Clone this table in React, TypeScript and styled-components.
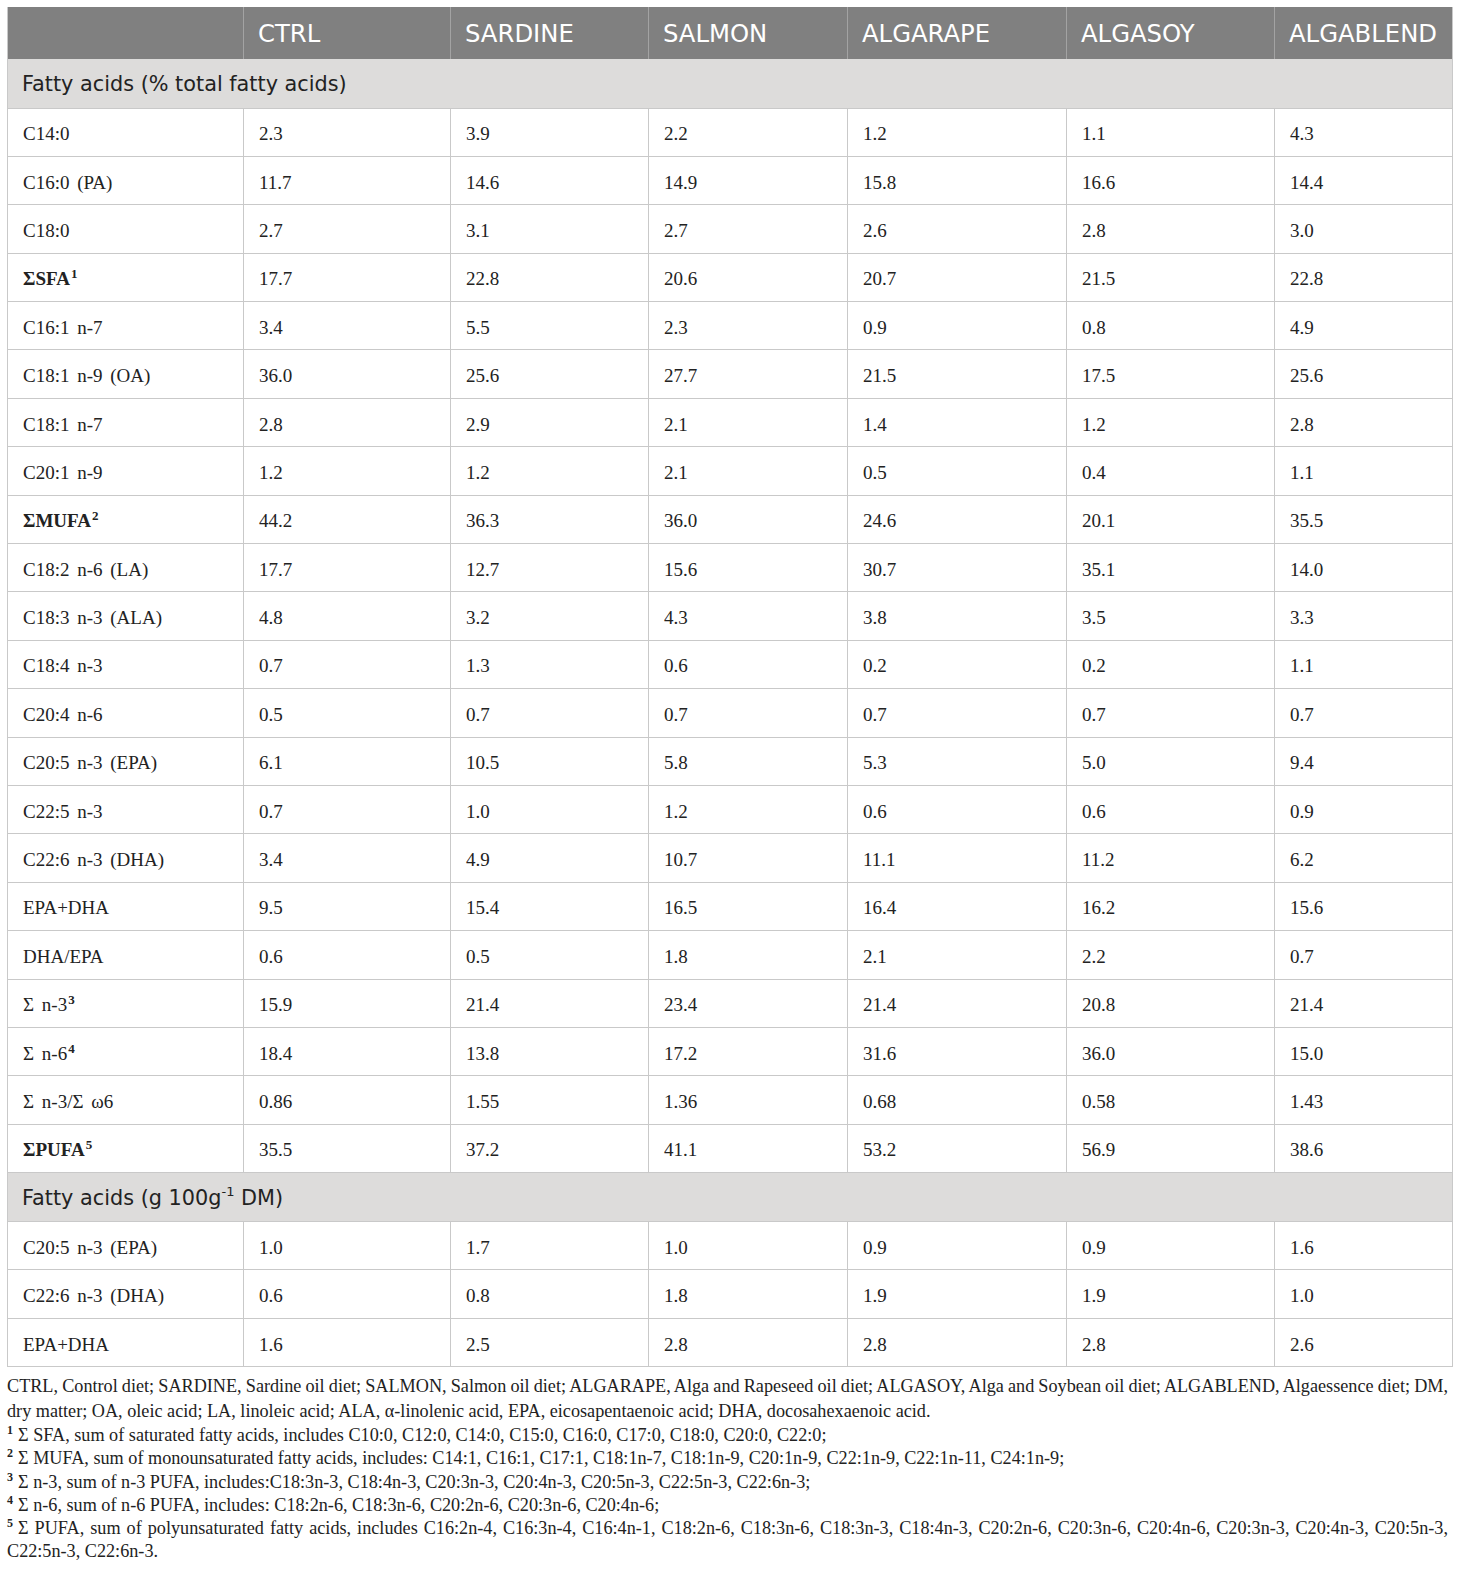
import React from "react";
import styled, { createGlobalStyle } from "styled-components";

const Global = createGlobalStyle`
  html, body { margin: 0; padding: 0; background: #ffffff; }
  body { font-family: "Liberation Serif", serif; color: #222; }
`;

const Page = styled.div`
  padding: 7px 8px 0 7px;
  width: 1460px;
  box-sizing: border-box;
`;

const Table = styled.table`
  width: 1445px;
  border-collapse: collapse;
  table-layout: fixed;
  border-left: 1px solid #c9c9c9;
  border-right: 1px solid #c9c9c9;
  border-bottom: 1px solid #c9c9c9;
`;

const Col = styled.col<{ $w: number }>`
  width: ${(p) => p.$w}px;
`;

const HeadRow = styled.tr`
  height: 52px;
  background: #808080;
`;

const HeadCell = styled.th`
  font-family: "DejaVu Sans", Verdana, sans-serif;
  font-weight: 400;
  font-size: 24.3px;
  color: #ffffff;
  text-align: left;
  padding: 0 0 0 14px;
  border-left: 1px solid #a3a3a3;
  vertical-align: middle;
  white-space: nowrap;
  &:first-child { border-left: none; }
`;

const SectionRow = styled.tr`
  height: 49px;
  background: #dddcdb;
`;

const SectionCell = styled.td`
  font-family: "DejaVu Sans", Verdana, sans-serif;
  font-size: 20.8px;
  color: #222;
  padding: 2px 0 0 14px;
  border-bottom: 1px solid #c9c9c9;
  vertical-align: middle;
  sup { font-size: 13px; vertical-align: 9px; line-height: 0; }
`;

const Row = styled.tr`
  height: 48.4px;
`;

const Cell = styled.td<{ $bold?: boolean }>`
  font-family: "Liberation Serif", serif;
  font-size: 19px;
  word-spacing: 3px;
  font-weight: ${(p) => (p.$bold ? 700 : 400)};
  color: #222;
  padding: 4px 0 0 15px;
  border: 1px solid #c9c9c9;
  vertical-align: middle;
  white-space: nowrap;
  sup { font-size: 13px; vertical-align: 7px; line-height: 0; font-weight: 700; margin-left: 1px; }
`;

const Notes = styled.div`
  width: 1441px;
  margin-top: 7px;
  font-family: "Liberation Serif", serif;
  font-size: 18.2px;
  line-height: 23.2px;
  color: #222;
`;

const Note = styled.p<{ $lh?: number }>`
  margin: 0;
  white-space: nowrap;
  line-height: ${(p) => (p.$lh ? `${p.$lh}px` : "23.2px")};
  sup { font-size: 12px; vertical-align: 7px; line-height: 0; font-weight: 700; margin-right: 5px; }
`;

const FullLine = styled.span`
  display: block;
  width: 1441px;
  word-spacing: -2px;
  text-align: justify;
  text-align-last: justify;
`;

type R = { label: React.ReactNode; bold?: boolean; v: string[] };

const cols = [236, 207, 198, 199, 219, 208, 178];
const heads = ["", "CTRL", "SARDINE", "SALMON", "ALGARAPE", "ALGASOY", "ALGABLEND"];

const sec1: R[] = [
  { label: "C14:0", v: ["2.3", "3.9", "2.2", "1.2", "1.1", "4.3"] },
  { label: "C16:0 (PA)", v: ["11.7", "14.6", "14.9", "15.8", "16.6", "14.4"] },
  { label: "C18:0", v: ["2.7", "3.1", "2.7", "2.6", "2.8", "3.0"] },
  { label: <>ΣSFA<sup>1</sup></>, bold: true, v: ["17.7", "22.8", "20.6", "20.7", "21.5", "22.8"] },
  { label: "C16:1 n-7", v: ["3.4", "5.5", "2.3", "0.9", "0.8", "4.9"] },
  { label: "C18:1 n-9 (OA)", v: ["36.0", "25.6", "27.7", "21.5", "17.5", "25.6"] },
  { label: "C18:1 n-7", v: ["2.8", "2.9", "2.1", "1.4", "1.2", "2.8"] },
  { label: "C20:1 n-9", v: ["1.2", "1.2", "2.1", "0.5", "0.4", "1.1"] },
  { label: <>ΣMUFA<sup>2</sup></>, bold: true, v: ["44.2", "36.3", "36.0", "24.6", "20.1", "35.5"] },
  { label: "C18:2 n-6 (LA)", v: ["17.7", "12.7", "15.6", "30.7", "35.1", "14.0"] },
  { label: "C18:3 n-3 (ALA)", v: ["4.8", "3.2", "4.3", "3.8", "3.5", "3.3"] },
  { label: "C18:4 n-3", v: ["0.7", "1.3", "0.6", "0.2", "0.2", "1.1"] },
  { label: "C20:4 n-6", v: ["0.5", "0.7", "0.7", "0.7", "0.7", "0.7"] },
  { label: "C20:5 n-3 (EPA)", v: ["6.1", "10.5", "5.8", "5.3", "5.0", "9.4"] },
  { label: "C22:5 n-3", v: ["0.7", "1.0", "1.2", "0.6", "0.6", "0.9"] },
  { label: "C22:6 n-3 (DHA)", v: ["3.4", "4.9", "10.7", "11.1", "11.2", "6.2"] },
  { label: "EPA+DHA", v: ["9.5", "15.4", "16.5", "16.4", "16.2", "15.6"] },
  { label: "DHA/EPA", v: ["0.6", "0.5", "1.8", "2.1", "2.2", "0.7"] },
  { label: <>Σ n-3<sup>3</sup></>, v: ["15.9", "21.4", "23.4", "21.4", "20.8", "21.4"] },
  { label: <>Σ n-6<sup>4</sup></>, v: ["18.4", "13.8", "17.2", "31.6", "36.0", "15.0"] },
  { label: "Σ n-3/Σ ω6", v: ["0.86", "1.55", "1.36", "0.68", "0.58", "1.43"] },
  { label: <>ΣPUFA<sup>5</sup></>, bold: true, v: ["35.5", "37.2", "41.1", "53.2", "56.9", "38.6"] },
];

const sec2: R[] = [
  { label: "C20:5 n-3 (EPA)", v: ["1.0", "1.7", "1.0", "0.9", "0.9", "1.6"] },
  { label: "C22:6 n-3 (DHA)", v: ["0.6", "0.8", "1.8", "1.9", "1.9", "1.0"] },
  { label: "EPA+DHA", v: ["1.6", "2.5", "2.8", "2.8", "2.8", "2.6"] },
];

const DataRows = ({ rows }: { rows: R[] }) => (
  <>
    {rows.map((r, i) => (
      <Row key={i}>
        <Cell $bold={r.bold}>{r.label}</Cell>
        {r.v.map((x, j) => (
          <Cell key={j}>{x}</Cell>
        ))}
      </Row>
    ))}
  </>
);

export default function App() {
  return (
    <Page>
      <Global />
      <Table>
        <colgroup>
          {cols.map((w, i) => (
            <Col key={i} $w={w} />
          ))}
        </colgroup>
        <thead>
          <HeadRow>
            {heads.map((h, i) => (
              <HeadCell key={i}>{h}</HeadCell>
            ))}
          </HeadRow>
        </thead>
        <tbody>
          <SectionRow>
            <SectionCell colSpan={7}>Fatty acids (% total fatty acids)</SectionCell>
          </SectionRow>
          <DataRows rows={sec1} />
          <SectionRow>
            <SectionCell colSpan={7}>
              Fatty acids (g 100g<sup>-1</sup> DM)
            </SectionCell>
          </SectionRow>
          <DataRows rows={sec2} />
        </tbody>
      </Table>
      <Notes>
        <Note $lh={25}>
          <FullLine>
            CTRL, Control diet; SARDINE, Sardine oil diet; SALMON, Salmon oil diet; ALGARAPE, Alga and Rapeseed oil diet;
            ALGASOY, Alga and Soybean oil diet; ALGABLEND, Algaessence diet; DM,
          </FullLine>
          dry matter; OA, oleic acid; LA, linoleic acid; ALA, α-linolenic acid, EPA, eicosapentaenoic acid; DHA,
          docosahexaenoic acid.
        </Note>
        <Note>
          <sup>1</sup>Σ SFA, sum of saturated fatty acids, includes C10:0, C12:0, C14:0, C15:0, C16:0, C17:0, C18:0, C20:0,
          C22:0;
        </Note>
        <Note>
          <sup>2</sup>Σ MUFA, sum of monounsaturated fatty acids, includes: C14:1, C16:1, C17:1, C18:1n-7, C18:1n-9,
          C20:1n-9, C22:1n-9, C22:1n-11, C24:1n-9;
        </Note>
        <Note>
          <sup>3</sup>Σ n-3, sum of n-3 PUFA, includes:C18:3n-3, C18:4n-3, C20:3n-3, C20:4n-3, C20:5n-3, C22:5n-3,
          C22:6n-3;
        </Note>
        <Note>
          <sup>4</sup>Σ n-6, sum of n-6 PUFA, includes: C18:2n-6, C18:3n-6, C20:2n-6, C20:3n-6, C20:4n-6;
        </Note>
        <Note>
          <FullLine>
            <sup>5</sup>Σ PUFA, sum of polyunsaturated fatty acids, includes C16:2n-4, C16:3n-4, C16:4n-1, C18:2n-6,
            C18:3n-6, C18:3n-3, C18:4n-3, C20:2n-6, C20:3n-6, C20:4n-6, C20:3n-3, C20:4n-3, C20:5n-3,
          </FullLine>
          C22:5n-3, C22:6n-3.
        </Note>
      </Notes>
    </Page>
  );
}
